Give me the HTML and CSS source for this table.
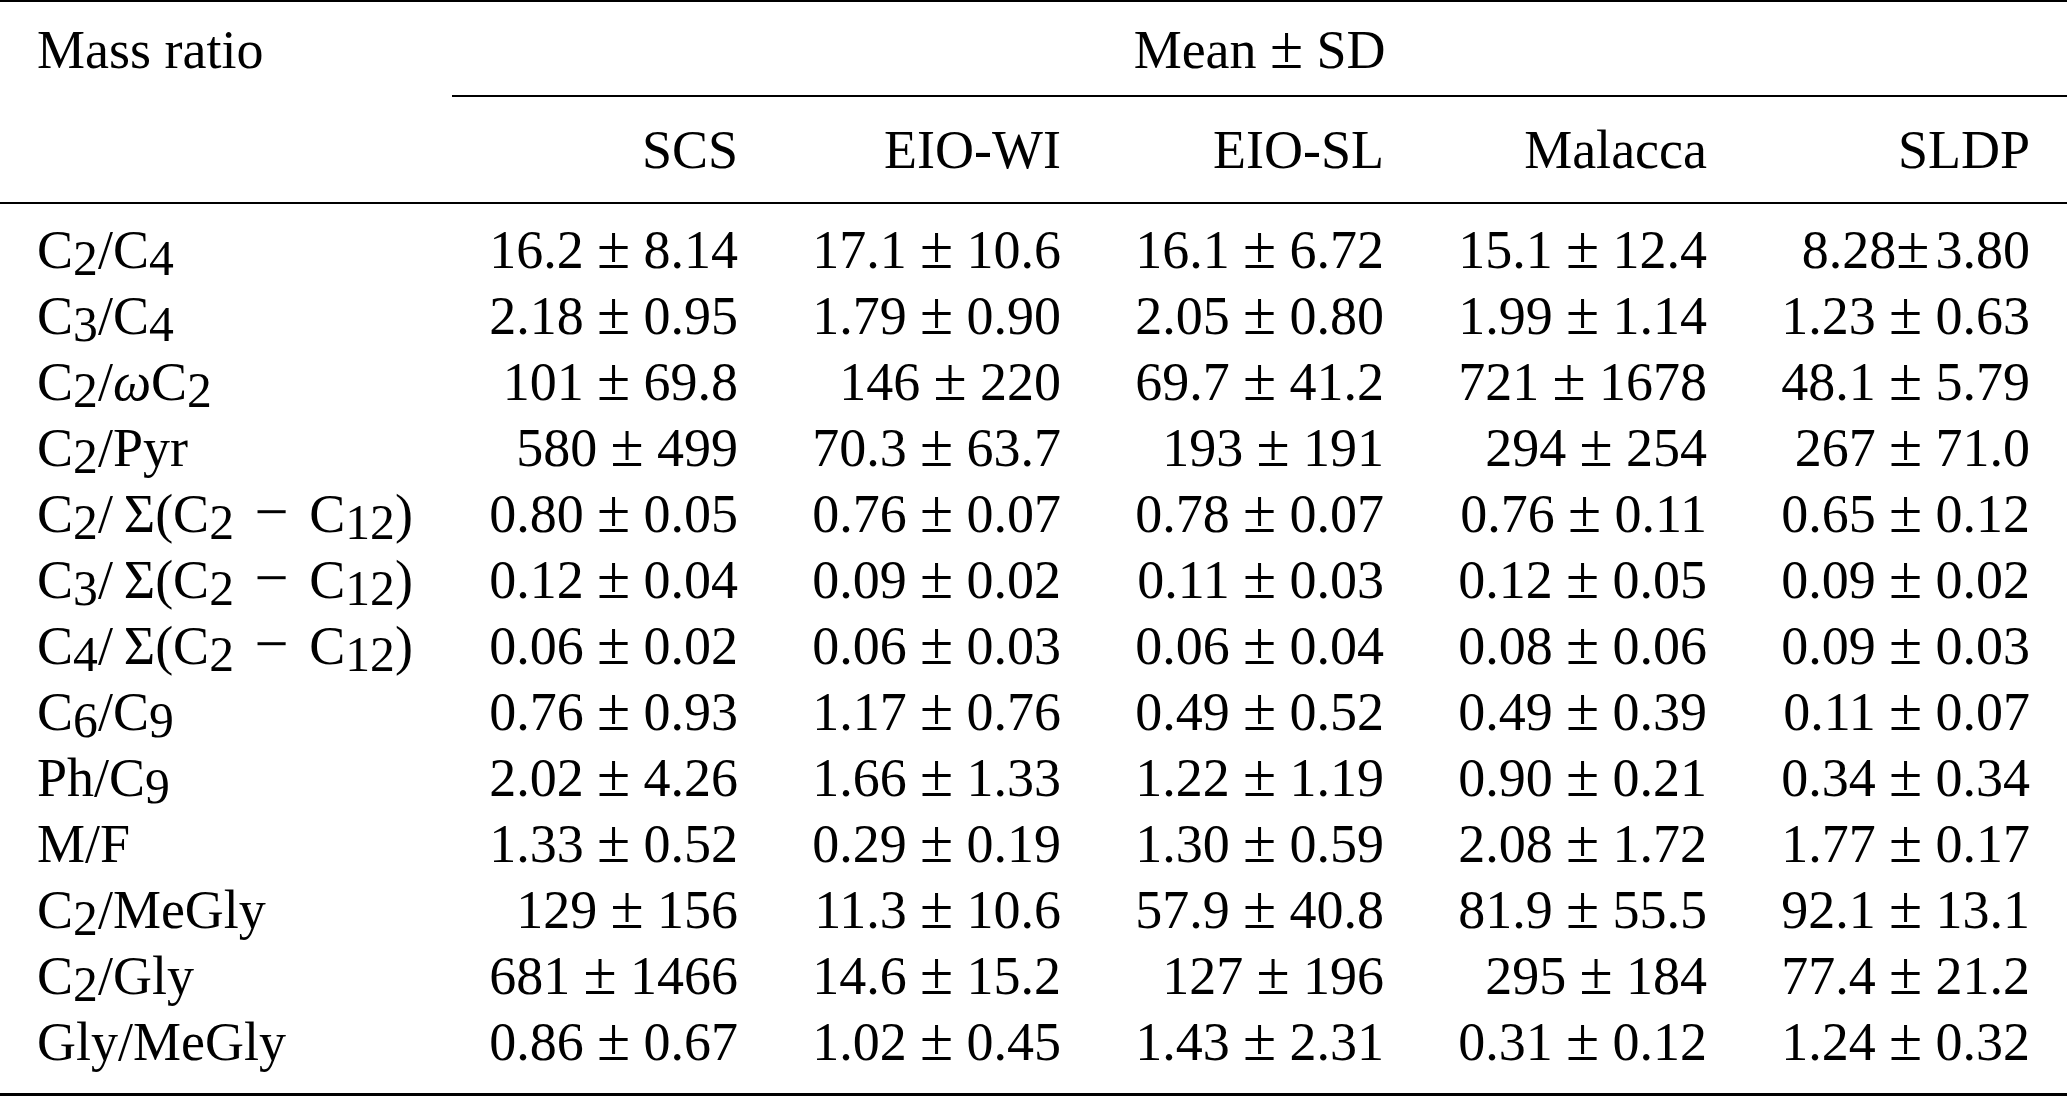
FILE: index.html
```html
<!DOCTYPE html>
<html lang="en">
<head>
<meta charset="utf-8">
<title>Mass ratios</title>
<link rel="stylesheet" href="styles.css">
</head>
<body>
<table class="ratios">
  <colgroup>
    <col class="col-label">
    <col class="col-val"><col class="col-val"><col class="col-val"><col class="col-val"><col class="col-val">
  </colgroup>
  <thead>
    <tr class="head-top">
      <th class="label">Mass ratio</th>
      <th class="span" colspan="5">Mean<span class="pm">±</span>SD</th>
    </tr>
    <tr class="head-sites">
      <th class="label"></th>
      <th class="num">SCS</th>
      <th class="num">EIO-WI</th>
      <th class="num">EIO-SL</th>
      <th class="num">Malacca</th>
      <th class="num">SLDP</th>
    </tr>
  </thead>
  <tbody>
    <tr class="first">
      <td class="label">C<span class="sub">2</span>/C<span class="sub">4</span></td>
      <td class="num">16.2<span class="pm">±</span>8.14</td>
      <td class="num">17.1<span class="pm">±</span>10.6</td>
      <td class="num">16.1<span class="pm">±</span>6.72</td>
      <td class="num">15.1<span class="pm">±</span>12.4</td>
      <td class="num">8.28<span class="pm tight">±</span>3.80</td>
    </tr>
    <tr>
      <td class="label">C<span class="sub">3</span>/C<span class="sub">4</span></td>
      <td class="num">2.18<span class="pm">±</span>0.95</td>
      <td class="num">1.79<span class="pm">±</span>0.90</td>
      <td class="num">2.05<span class="pm">±</span>0.80</td>
      <td class="num">1.99<span class="pm">±</span>1.14</td>
      <td class="num">1.23<span class="pm">±</span>0.63</td>
    </tr>
    <tr>
      <td class="label">C<span class="sub">2</span>/<span class="omega">ω</span>C<span class="sub">2</span></td>
      <td class="num">101<span class="pm">±</span>69.8</td>
      <td class="num">146<span class="pm">±</span>220</td>
      <td class="num">69.7<span class="pm">±</span>41.2</td>
      <td class="num">721<span class="pm">±</span>1678</td>
      <td class="num">48.1<span class="pm">±</span>5.79</td>
    </tr>
    <tr>
      <td class="label">C<span class="sub">2</span>/Pyr</td>
      <td class="num">580<span class="pm">±</span>499</td>
      <td class="num">70.3<span class="pm">±</span>63.7</td>
      <td class="num">193<span class="pm">±</span>191</td>
      <td class="num">294<span class="pm">±</span>254</td>
      <td class="num">267<span class="pm">±</span>71.0</td>
    </tr>
    <tr>
      <td class="label">C<span class="sub">2</span>/<span class="sig">Σ</span>(C<span class="sub">2</span><span class="minus">−</span>C<span class="sub">12</span>)</td>
      <td class="num">0.80<span class="pm">±</span>0.05</td>
      <td class="num">0.76<span class="pm">±</span>0.07</td>
      <td class="num">0.78<span class="pm">±</span>0.07</td>
      <td class="num">0.76<span class="pm">±</span>0.11</td>
      <td class="num">0.65<span class="pm">±</span>0.12</td>
    </tr>
    <tr>
      <td class="label">C<span class="sub">3</span>/<span class="sig">Σ</span>(C<span class="sub">2</span><span class="minus">−</span>C<span class="sub">12</span>)</td>
      <td class="num">0.12<span class="pm">±</span>0.04</td>
      <td class="num">0.09<span class="pm">±</span>0.02</td>
      <td class="num">0.11<span class="pm">±</span>0.03</td>
      <td class="num">0.12<span class="pm">±</span>0.05</td>
      <td class="num">0.09<span class="pm">±</span>0.02</td>
    </tr>
    <tr>
      <td class="label">C<span class="sub">4</span>/<span class="sig">Σ</span>(C<span class="sub">2</span><span class="minus">−</span>C<span class="sub">12</span>)</td>
      <td class="num">0.06<span class="pm">±</span>0.02</td>
      <td class="num">0.06<span class="pm">±</span>0.03</td>
      <td class="num">0.06<span class="pm">±</span>0.04</td>
      <td class="num">0.08<span class="pm">±</span>0.06</td>
      <td class="num">0.09<span class="pm">±</span>0.03</td>
    </tr>
    <tr>
      <td class="label">C<span class="sub">6</span>/C<span class="sub">9</span></td>
      <td class="num">0.76<span class="pm">±</span>0.93</td>
      <td class="num">1.17<span class="pm">±</span>0.76</td>
      <td class="num">0.49<span class="pm">±</span>0.52</td>
      <td class="num">0.49<span class="pm">±</span>0.39</td>
      <td class="num">0.11<span class="pm">±</span>0.07</td>
    </tr>
    <tr>
      <td class="label">Ph/C<span class="sub">9</span></td>
      <td class="num">2.02<span class="pm">±</span>4.26</td>
      <td class="num">1.66<span class="pm">±</span>1.33</td>
      <td class="num">1.22<span class="pm">±</span>1.19</td>
      <td class="num">0.90<span class="pm">±</span>0.21</td>
      <td class="num">0.34<span class="pm">±</span>0.34</td>
    </tr>
    <tr>
      <td class="label">M/F</td>
      <td class="num">1.33<span class="pm">±</span>0.52</td>
      <td class="num">0.29<span class="pm">±</span>0.19</td>
      <td class="num">1.30<span class="pm">±</span>0.59</td>
      <td class="num">2.08<span class="pm">±</span>1.72</td>
      <td class="num">1.77<span class="pm">±</span>0.17</td>
    </tr>
    <tr>
      <td class="label">C<span class="sub">2</span>/MeGly</td>
      <td class="num">129<span class="pm">±</span>156</td>
      <td class="num">11.3<span class="pm">±</span>10.6</td>
      <td class="num">57.9<span class="pm">±</span>40.8</td>
      <td class="num">81.9<span class="pm">±</span>55.5</td>
      <td class="num">92.1<span class="pm">±</span>13.1</td>
    </tr>
    <tr>
      <td class="label">C<span class="sub">2</span>/Gly</td>
      <td class="num">681<span class="pm">±</span>1466</td>
      <td class="num">14.6<span class="pm">±</span>15.2</td>
      <td class="num">127<span class="pm">±</span>196</td>
      <td class="num">295<span class="pm">±</span>184</td>
      <td class="num">77.4<span class="pm">±</span>21.2</td>
    </tr>
    <tr class="last">
      <td class="label">Gly/MeGly</td>
      <td class="num">0.86<span class="pm">±</span>0.67</td>
      <td class="num">1.02<span class="pm">±</span>0.45</td>
      <td class="num">1.43<span class="pm">±</span>2.31</td>
      <td class="num">0.31<span class="pm">±</span>0.12</td>
      <td class="num">1.24<span class="pm">±</span>0.32</td>
    </tr>
  </tbody>
</table>
</body>
</html>
```
FILE: styles.css
```css
html, body {
  margin: 0;
  padding: 0;
  background: #fff;
}

body {
  font-family: "Liberation Serif", "Times New Roman", serif;
  font-size: 54px;
  color: #000;
}

.ratios {
  width: 2067px;
  table-layout: fixed;
  border-collapse: separate;
  border-spacing: 0;
  border-top: 2px solid #000;
  border-bottom: 3px solid #000;
}

.col-label { width: 452px; }
.col-val { width: 323px; }

.ratios th,
.ratios td {
  padding: 0 37px;
  line-height: 66px;
  vertical-align: top;
  font-weight: normal;
  white-space: nowrap;
}

.ratios .label { text-align: left; }
.ratios .num {
  text-align: right;
  padding-left: 12px;
}
.ratios .span { text-align: center; }

.head-top th {
  padding-top: 15px;
  padding-bottom: 14px;
}

.head-top .span {
  padding-bottom: 12px;
  border-bottom: 2px solid #000;
}

.head-sites th {
  padding-top: 20px;
  padding-bottom: 19px;
  border-bottom: 2px solid #000;
}

.first td { padding-top: 13px; }
.last td { padding-bottom: 18px; }

.sub {
  font-size: 0.92em;
  line-height: 0;
  vertical-align: -7px;
}

.pm {
  font-size: 1.12em;
  line-height: 0;
  margin: 0 0.22em;
}

.pm.tight {
  margin: 0 0.1em 0 0;
}

.minus {
  font-size: 1.12em;
  line-height: 0;
  margin: 0 0.34em;
}

.sig { margin-left: 0.2em; }

.omega { font-style: italic; }
```
